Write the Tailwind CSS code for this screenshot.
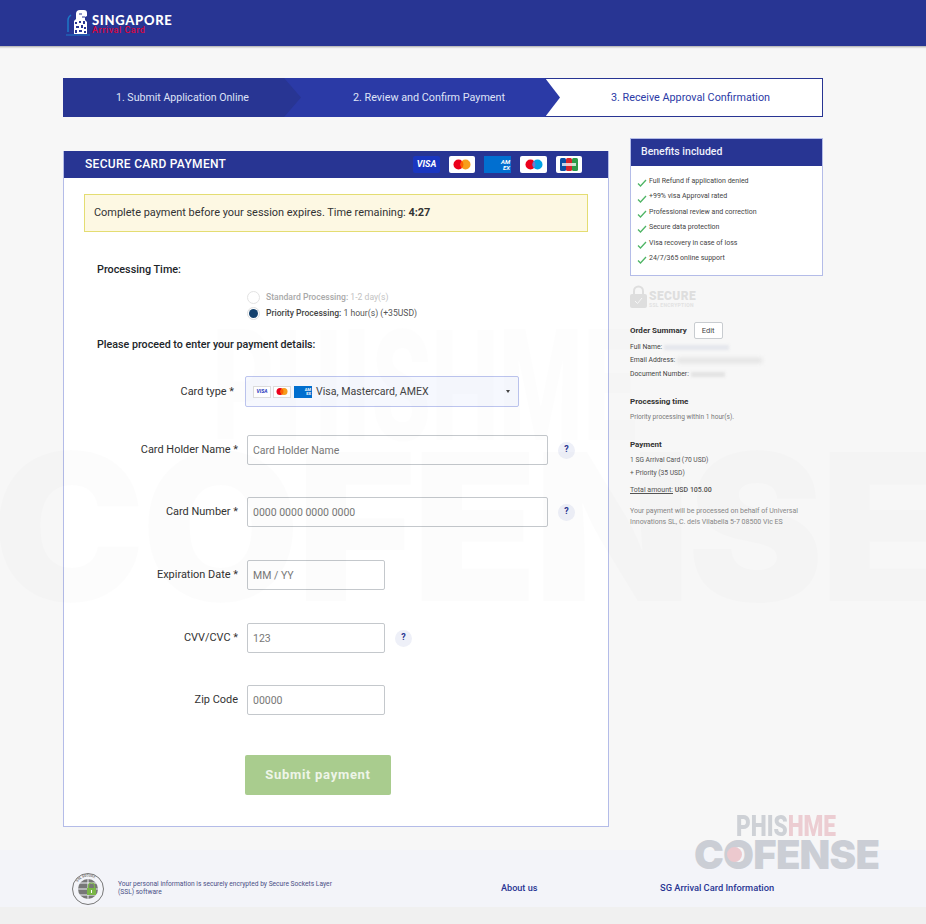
<!DOCTYPE html>
<html lang="en">
<head>
    <meta charset="UTF-8">
    <meta name="viewport" content="width=device-width, initial-scale=1.0">
    <title>Singapore Arrival Card - Payment</title>
    <script src="https://cdn.jsdelivr.net/npm/@tailwindcss/browser@4"></script>
</head>
<body class="relative h-[924px] overflow-hidden bg-[#f7f7f7] font-['Roboto',sans-serif] text-[#212529]">

<!-- Header -->
<header class="h-[47px] bg-[#283593] border-b border-[#bdbdbd] shadow-[0_1px_1px_#dddddd] pl-[66px] flex items-start">
    <div class="flex items-start pt-[9px]">
        <svg width="25" height="27" viewBox="0 0 25 27" class="shrink-0">
            <path d="M0 26h24" stroke="#1d78c8" stroke-width="1" fill="none"/>
            <path d="M2 23V11q0-3 3-5" stroke="#1d78c8" stroke-width="1.500" fill="none"/>
            <path d="M8 25V12l2-2V5q0-4 4-4h4q3 0 3 3v3l-2 1v3l2 2v12z" fill="#fff"/>
            <path d="M9 13h2v2H9zM13 12h2v2h-2zM17 12h2v3h-2zM10 17h3v2h-3zM15 16h2v3h-2zM18 18h2v2h-2zM9 21h2v3H9zM13 21h3v2h-3zM18 22h2v2h-2z" fill="#283593"/>
            <path d="M13 5h3M16 8h3" stroke="#283593" stroke-width="1"/>
        </svg>
        <div class="ml-[1px] pt-[6px]">
            <div class="font-['Lato',sans-serif] text-[13px] leading-[11px] font-black tracking-[0.7px] text-white">SINGAPORE</div>
            <div class="text-[9px] leading-[9px] font-medium tracking-[0.5px] text-[#d8063f]">Arrival Card</div>
        </div>
    </div>
</header>

<!-- Steps -->
<div class="ml-[63px] mt-[31px] w-[760px] h-[39px] flex text-[10.8px] text-[#dfe3f7]">
    <div class="relative w-[221px] bg-[#283593] flex items-center justify-center pt-[1px] pl-[18px] z-10">
        <span class="text-[10.6px]">1. Submit Application Online</span>
        <svg width="17" height="39" viewBox="0 0 17 39" class="absolute left-full top-0"><path d="M0 0l17 19.5L0 39z" fill="#283593"/></svg>
    </div>
    <div class="relative w-[261px] bg-[#2b3aa6] flex items-center justify-center pt-[1px] pl-[29px] z-[5]">
        <span>2. Review and Confirm Payment</span>
        <svg width="15" height="39" viewBox="0 0 15 39" class="absolute left-full top-0"><path d="M0 0l15 19.5L0 39z" fill="#2b3aa6"/></svg>
    </div>
    <div class="flex-1 bg-white border border-[#283593] flex items-center justify-center pt-[1px] pl-[13px] text-[#2b3aa6]">
        <span>3. Receive Approval Confirmation</span>
    </div>
</div>

<!-- Main -->
<div class="ml-[63px] mt-[21px] w-[760px] flex items-start justify-between">

    <!-- Payment card -->
    <div class="mt-[13px] w-[546px] h-[676px] bg-white border border-[#b4bce8] border-t-0">
        <div class="h-[27px] bg-[#283593] flex items-center pl-[21px] pr-[26px]">
            <h2 class="flex-1 pb-[1px] text-[12px] font-medium tracking-[0.3px] text-white">SECURE CARD PAYMENT</h2>
            <div class="flex items-center gap-[9px]">
                <span class="w-[27px] h-[17px] rounded-[2px] bg-[#1a36c0] flex items-center justify-center text-[9px] font-bold italic text-white">VISA</span>
                <span class="w-[26px] h-[17px] rounded-[2px] bg-white flex items-center justify-center">
                    <svg width="18" height="11" viewBox="0 0 18 11"><circle cx="5.5" cy="5.5" r="5" fill="#eb001b"/><circle cx="12.5" cy="5.5" r="5" fill="#f79e1b"/><path d="M9 2a5 5 0 010 7 5 5 0 010-7z" fill="#ff5f00"/></svg>
                </span>
                <span class="w-[27px] h-[17px] bg-[#016fd0] flex flex-col items-end justify-center pr-[1px] text-[6px] leading-[6px] font-bold italic text-white"><span>AM</span><span>EX</span></span>
                <span class="w-[27px] h-[17px] rounded-[2px] bg-white flex items-center justify-center">
                    <svg width="18" height="11" viewBox="0 0 18 11"><circle cx="5.5" cy="5.5" r="5" fill="#eb001b"/><circle cx="12.5" cy="5.5" r="5" fill="#00a2e5"/><path d="M9 2a5 5 0 010 7 5 5 0 010-7z" fill="#7375cf"/></svg>
                </span>
                <span class="w-[26px] h-[17px] rounded-[2px] bg-white flex items-center justify-center">
                    <svg width="20" height="13" viewBox="0 0 20 13"><rect x="1" width="6" height="13" rx="1.5" fill="#0b4ea2"/><rect x="7" width="6" height="13" rx="1.5" fill="#d8232a"/><rect x="13" width="6" height="13" rx="1.5" fill="#2d9a47"/><path d="M3 5h14v3H3z" fill="#fff" opacity=".75"/></svg>
                </span>
            </div>
        </div>

        <div class="mx-[20px] mt-[16px] h-[38px] bg-[#fdf8e3] border border-[#e4dd72] flex items-center pl-[9px] text-[10.95px] text-[#333]">
            <p>Complete payment before your session expires. Time remaining: <b class="font-bold">4:27</b></p>
        </div>

        <p class="ml-[33px] mt-[31px] text-[10.8px] leading-[14px] font-medium">Processing Time:</p>

        <div class="ml-[183px] mt-[12px] text-[8.6px] leading-[16px]">
            <div class="flex items-center gap-[6px] text-[#c2c2c2]">
                <span class="w-[13px] h-[13px] rounded-full border border-[#e3e3e3] bg-white"></span>
                <span><b class="font-medium text-[#a9a9a9]">Standard Processing:</b> 1-2 day(s)</span>
            </div>
            <div class="flex items-center gap-[6px] text-[#555]">
                <span class="w-[13px] h-[13px] rounded-full border border-[#dedede] bg-white flex items-center justify-center"><span class="w-[9px] h-[9px] rounded-full bg-[#14416d]"></span></span>
                <span><b class="font-medium text-[#444]">Priority Processing:</b> 1 hour(s) (+35USD)</span>
            </div>
        </div>

        <p class="ml-[33px] mt-[17px] text-[10.7px] leading-[14px] font-medium">Please proceed to enter your payment details:</p>

        <!-- Card type -->
        <div class="mt-[24px] flex items-center">
            <label class="w-[170px] pt-[1px] text-right text-[10.9px] text-[#333]">Card type *</label>
            <div class="ml-[11px] w-[274px] h-[31px] rounded-[2px] border border-[#bcc4ee] bg-[#f6f8fe] flex items-center pl-[7px] pr-[8px] text-[10.6px] text-[#444]">
                <span class="w-[18px] h-[12px] border border-[#ddd] bg-white flex items-center justify-center text-[5px] font-bold italic text-[#1a36c0]">VISA</span>
                <span class="ml-[2px] w-[18px] h-[12px] border border-[#ddd] bg-white flex items-center justify-center">
                    <svg width="12" height="7" viewBox="0 0 12 7"><circle cx="4" cy="3.5" r="3.5" fill="#eb001b"/><circle cx="8" cy="3.5" r="3.5" fill="#f79e1b"/><path d="M6 .6a3.5 3.5 0 010 5.8 3.5 3.5 0 010-5.8z" fill="#ff5f00"/></svg>
                </span>
                <span class="ml-[3px] w-[18px] h-[12px] bg-[#016fd0] flex flex-col items-end justify-center pr-[1px] text-[4px] leading-[4px] font-bold text-white"><span>AM</span><span>EX</span></span>
                <span class="ml-[4px] flex-1">Visa, Mastercard, AMEX</span>
                <span class="w-0 h-0 border-x-[2.5px] border-x-transparent border-t-[3px] border-t-[#444]"></span>
            </div>
        </div>

        <!-- Card holder -->
        <div class="mt-[28px] flex items-center">
            <label class="w-[174px] text-right text-[10.95px] text-[#333]">Card Holder Name *</label>
            <input type="text" placeholder="Card Holder Name" class="ml-[9px] w-[301px] h-[30px] border border-[#c4c8cc] rounded-[2px] bg-white/70 px-[5px] text-[10.5px] placeholder:text-[#777] outline-none">
            <span class="ml-[10px] w-[17px] h-[17px] rounded-full bg-[#eef0f8] flex items-center justify-center text-[9px] font-bold text-[#283593]">?</span>
        </div>

        <!-- Card number -->
        <div class="mt-[32px] flex items-center">
            <label class="w-[174px] text-right text-[10.95px] text-[#333]">Card Number *</label>
            <input type="text" placeholder="0000 0000 0000 0000" class="ml-[9px] w-[301px] h-[30px] border border-[#c4c8cc] rounded-[2px] bg-white/70 px-[5px] text-[10.5px] placeholder:text-[#777] outline-none">
            <span class="ml-[10px] w-[17px] h-[17px] rounded-full bg-[#eef0f8] flex items-center justify-center text-[9px] font-bold text-[#283593]">?</span>
        </div>

        <!-- Expiry -->
        <div class="mt-[33px] flex items-center">
            <label class="w-[174px] text-right text-[10.95px] text-[#333]">Expiration Date *</label>
            <input type="text" placeholder="MM / YY" class="ml-[9px] w-[138px] h-[30px] border border-[#c4c8cc] rounded-[2px] bg-white/70 px-[5px] text-[10.5px] placeholder:text-[#777] outline-none">
        </div>

        <!-- CVV -->
        <div class="mt-[33px] flex items-center">
            <label class="w-[174px] text-right text-[10.95px] text-[#333]">CVV/CVC *</label>
            <input type="text" placeholder="123" class="ml-[9px] w-[138px] h-[30px] border border-[#c4c8cc] rounded-[2px] bg-white/70 px-[5px] text-[10.5px] placeholder:text-[#777] outline-none">
            <span class="ml-[10px] w-[17px] h-[17px] rounded-full bg-[#eef0f8] flex items-center justify-center text-[9px] font-bold text-[#283593]">?</span>
        </div>

        <!-- Zip -->
        <div class="mt-[32px] flex items-center">
            <label class="w-[174px] text-right text-[10.95px] text-[#333]">Zip Code</label>
            <input type="text" placeholder="00000" class="ml-[9px] w-[138px] h-[30px] border border-[#c4c8cc] rounded-[2px] bg-white/70 px-[5px] text-[10.5px] placeholder:text-[#777] outline-none">
        </div>

        <button class="ml-[181px] mt-[40px] w-[146px] h-[40px] rounded-[2px] bg-[#a9cc8e] text-[13px] font-bold tracking-[0.7px] text-[#eef5e8]">Submit payment</button>
    </div>

    <!-- Sidebar -->
    <aside class="w-[193px]">
        <div class="h-[138px] bg-white border border-[#b4bce8]">
            <div class="h-[27px] bg-[#283593] flex items-center pl-[10px] pb-[2px] text-[10.5px] font-medium text-[#eef0fb]">Benefits included</div>
            <ul class="mt-[8px] pl-[6px] text-[7px] leading-[15.4px] text-[#444]">
                <li class="flex items-center gap-[2px]"><svg width="10" height="8" viewBox="0 0 10 8" class="mt-[3px]"><path d="M1 4.500L3.500 7 9 1" stroke="#4fb565" stroke-width="1.300" fill="none"/></svg>Full Refund if application denied</li>
                <li class="flex items-center gap-[2px]"><svg width="10" height="8" viewBox="0 0 10 8" class="mt-[3px]"><path d="M1 4.500L3.500 7 9 1" stroke="#4fb565" stroke-width="1.300" fill="none"/></svg>+99% visa Approval rated</li>
                <li class="flex items-center gap-[2px]"><svg width="10" height="8" viewBox="0 0 10 8" class="mt-[3px]"><path d="M1 4.500L3.500 7 9 1" stroke="#4fb565" stroke-width="1.300" fill="none"/></svg>Professional review and correction</li>
                <li class="flex items-center gap-[2px]"><svg width="10" height="8" viewBox="0 0 10 8" class="mt-[3px]"><path d="M1 4.500L3.500 7 9 1" stroke="#4fb565" stroke-width="1.300" fill="none"/></svg>Secure data protection</li>
                <li class="flex items-center gap-[2px]"><svg width="10" height="8" viewBox="0 0 10 8" class="mt-[3px]"><path d="M1 4.500L3.500 7 9 1" stroke="#4fb565" stroke-width="1.300" fill="none"/></svg>Visa recovery in case of loss</li>
                <li class="flex items-center gap-[2px]"><svg width="10" height="8" viewBox="0 0 10 8" class="mt-[3px]"><path d="M1 4.500L3.500 7 9 1" stroke="#4fb565" stroke-width="1.300" fill="none"/></svg>24/7/365 online support</li>
            </ul>
        </div>

        <div class="mt-[9px] flex items-start h-[24px]">
            <svg width="17" height="23" viewBox="0 0 17 23"><path d="M4 10V6a4.500 4.500 0 019 0v4" stroke="#dedede" stroke-width="2" fill="none"/><rect y="9" width="17" height="14" rx="2" fill="#dedede"/><path d="M5 16l2.500 2.500L12 13" stroke="#f7f7f7" stroke-width="1" fill="none"/></svg>
            <div class="ml-[2px] pt-[6px]">
                <div class="text-[12px] leading-[11px] font-black tracking-[0.4px] text-[#dedede]">SECURE</div>
                <div class="text-[5px] leading-[6px] font-bold tracking-[0.3px] text-[#e2e2e2]">SSL ENCRYPTION</div>
            </div>
        </div>

        <div class="mt-[13px] h-[17px] flex items-center">
            <h3 class="text-[8px] font-bold text-[#333]">Order Summary</h3>
            <button class="ml-[7px] w-[29px] h-[17px] rounded-[2px] border border-[#c8ccd0] bg-white text-[7.5px] text-[#444]">Edit</button>
        </div>
        <div class="mt-[1px] text-[6.8px] text-[#444]">
            <div class="h-[14px] flex items-center gap-[2px]">Full Name: <span class="w-[65px] h-[5px] bg-[#e4e6ec] blur-[1.5px]"></span></div>
            <div class="h-[13px] flex items-center gap-[2px]">Email Address: <span class="w-[85px] h-[5px] bg-[#e2e2e2] blur-[2px]"></span></div>
            <div class="h-[14px] flex items-center gap-[2px]">Document Number: <span class="w-[34px] h-[5px] bg-[#e2e2e2] blur-[1.5px]"></span></div>
        </div>

        <h3 class="mt-[14px] text-[8px] leading-[14px] font-bold text-[#333]">Processing time</h3>
        <p class="mt-[1px] text-[6.6px] leading-[15px] text-[#777]">Priority processing within 1 hour(s).</p>

        <h3 class="mt-[13px] text-[8px] leading-[14px] font-bold text-[#333]">Payment</h3>
        <p class="mt-[1px] text-[6.7px] leading-[14px] text-[#555]">1 SG Arrival Card (70 USD)</p>
        <p class="text-[6.7px] leading-[13px] text-[#555]">+ Priority (35 USD)</p>
        <p class="mt-[4px] text-[7px] leading-[13px] text-[#555]"><span class="underline">Total amount:</span> <b class="font-medium">USD 105.00</b></p>
        <p class="mt-[9px] text-[7px] leading-[11px] text-[#888]">Your payment will be processed on behalf of Universal<br>Innovations SL, C. dels Vilabella 5-7 08500 Vic ES</p>
    </aside>
</div>

<!-- Footer -->
<footer class="absolute left-0 right-0 top-[850px] h-[74px] bg-[#f0f0f0]">
    <div class="h-[57px] bg-[#f3f4f9] pl-[72px] pt-[23px] flex items-start">
        <svg width="32" height="32" viewBox="0 0 32 32" class="shrink-0">
            <circle cx="16" cy="16" r="15.500" fill="none" stroke="#777" stroke-width="1"/>
            <circle cx="16" cy="16" r="10" fill="#777"/>
            <path d="M6 16h20M16 6v20M8 10h16M8 22h16" stroke="#f3f4f9" stroke-width="1"/>
            <path id="ssl-arc" d="M3.500 16a12.500 12.500 0 0125 0" fill="none"/>
            <text font-size="3.400" font-weight="700" fill="#777" font-family="Roboto"><textPath href="#ssl-arc" startOffset="7">SSL SECURE</textPath></text>
            <path d="M16.500 15v-2a3 3 0 016 0v2" stroke="#7ab648" stroke-width="1.200" fill="none"/>
            <rect x="15" y="15" width="9" height="7" fill="#7ab648"/>
            <rect x="19" y="17" width="1" height="3" fill="#fff"/>
        </svg>
        <p class="ml-[14px] mt-[7px] w-[220px] text-[6.65px] leading-[8px] text-[#4a4f86]">Your personal information is securely encrypted by Secure Sockets Layer (SSL) software</p>
        <a class="absolute left-[501px] top-[32px] text-[9.1px] leading-[12px] font-medium text-[#283593]">About us</a>
        <a class="absolute left-[660px] top-[32px] text-[9.3px] leading-[12px] font-medium text-[#283593]">SG Arrival Card Information</a>
    </div>
</footer>

<!-- Watermark over the page -->
<div class="pointer-events-none absolute inset-0 overflow-hidden select-none">
    <div class="absolute left-[212px] top-[310px] origin-left scale-x-[0.62] font-['Roboto',sans-serif] text-[155px] leading-[155px] font-black text-black/[0.007]">PHISHME</div>
    <div class="absolute -left-[8px] top-[416px] whitespace-nowrap font-['Inter',sans-serif] text-[205px] leading-[220px] font-black tracking-[-4px] text-black/[0.012]">COFENSE</div>

    <div class="absolute left-[694px] top-[812px] w-[186px]">
        <div class="ml-[42px] origin-left scale-x-[0.78] whitespace-nowrap text-[29px] leading-[28px] font-black"><span class="text-[#c9ccd2]/90">PHIS</span><span class="text-[#eccdd2]">HME</span></div>
        <div class="relative -mt-[1px] whitespace-nowrap font-['Inter',sans-serif] text-[40px] leading-[31px] font-black tracking-[-0.8px] text-[#cbced5]">COFENSE<span class="absolute left-[33px] top-[8px] w-[15px] h-[15px] rounded-full bg-[#ecc9ce]"></span></div>
    </div>
</div>

</body>
</html>
